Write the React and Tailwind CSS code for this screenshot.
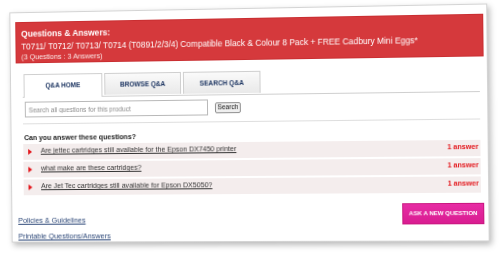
export default function App() {
  const rows = [
    "Are jettec cartridges still available for the Epson DX7450 printer",
    "what make are these cartridges?",
    "Are Jet Tec cartridges still available for Epson DX5050?",
  ];
  return (
    <div className="w-[500px] h-[253px] overflow-hidden bg-white pt-[8px] pl-[6px] font-['Liberation_Sans',Arial,sans-serif]">
      <div className="w-[479px] h-[234px] [transform:perspective(1000px)_rotateY(-4deg)_rotate(-0.6deg)] border border-[#d4d4d4] bg-white shadow-[2px_3px_6px_rgba(0,0,0,0.28)] flex flex-col">
        {/* Header */}
        <div className="mt-[9px] ml-[5px] mr-[3px] h-[45px] bg-[#d5393c] border border-[#c92e31] pl-[5px] pt-[6px] text-white">
          <div className="text-[8.6px] leading-[11px] font-bold">Questions &amp; Answers:</div>
          <div className="mt-[2px] text-[8.4px] leading-[10px] whitespace-nowrap">
            T0711/ T0712/ T0713/ T0714 (T0891/2/3/4) Compatible Black &amp; Colour 8 Pack + FREE Cadbury Mini Eggs*
          </div>
          <div className="mt-[1px] text-[7.3px] leading-[9px] text-[#fbe9e9]">(3 Questions : 3 Answers)</div>
        </div>

        {/* Content */}
        <div className="ml-[12px] mr-[7px]">
          {/* Tabs */}
          <div className="mt-[11px] flex gap-[2px] border-b border-[#cfcfcf] pl-[1px]">
            <div className="w-[79px] h-[22px] -mb-px box-content pb-px bg-white border border-b-0 border-[#cfcfcf] flex items-center justify-center text-[6.6px] font-bold text-[#1f3763]">
              Q&amp;A HOME
            </div>
            <div className="w-[78px] h-[22px] bg-gradient-to-b from-[#fafafa] to-[#e9e9e9] border border-b-0 border-[#cfcfcf] flex items-center justify-center text-[6.6px] font-bold text-[#1f3763]">
              BROWSE Q&amp;A
            </div>
            <div className="w-[78px] h-[22px] bg-gradient-to-b from-[#fafafa] to-[#e9e9e9] border border-b-0 border-[#cfcfcf] flex items-center justify-center text-[6.6px] font-bold text-[#1f3763]">
              SEARCH Q&amp;A
            </div>
          </div>

          {/* Search */}
          <div className="mt-[4px] flex items-center pl-[2px]">
            <input
              type="text"
              placeholder="Search all questions for this product"
              className="w-[187px] h-[16px] border border-[#b8b8b8] px-[3px] text-[6.6px] text-[#555] placeholder:text-[#8c8c8c] font-['Liberation_Sans',Arial,sans-serif] outline-none"
            />
            <button className="ml-[7px] w-[26px] h-[11px] border border-[#8f8f8f] rounded-[2px] bg-[#efefef] text-[6.6px] leading-none text-[#111] font-['Liberation_Sans',Arial,sans-serif] flex items-center justify-center">
              Search
            </button>
          </div>

          <div className="mt-[6px] h-px bg-[#dedede]" />

          <div className="mt-[9px] pl-[1px] text-[7.1px] leading-[10px] font-bold text-[#1a1a1a]">
            Can you answer these questions?
          </div>

          <div className="mt-[1px] flex flex-col gap-[2px]">
            {rows.map((q) => (
              <div key={q} className="h-[16px] bg-[#f4eded] flex items-center pl-[5px] pr-[2px]">
                <span className="w-0 h-0 border-y-[3px] border-y-transparent border-l-[4px] border-l-[#e3171c]" />
                <a href="#" className="ml-[9px] text-[7.1px] leading-none text-[#333] underline">
                  {q}
                </a>
                <span className="ml-auto text-[7.1px] leading-none font-bold text-[#e3171c]">1 answer</span>
              </div>
            ))}
          </div>
        </div>

        {/* Footer */}
        <div className="mt-[10px] ml-[6px] mr-[4px] flex justify-between items-start">
          <div className="pt-[11px] flex flex-col gap-[6px]">
            <a href="#" className="text-[7.4px] leading-[10px] text-[#2b4677] underline">Policies &amp; Guidelines</a>
            <a href="#" className="text-[7.4px] leading-[10px] text-[#2b4677] underline">Printable Questions/Answers</a>
          </div>
          <div className="w-[80px] h-[21px] bg-gradient-to-b from-[#e72ca4] to-[#d91c91] border border-[#c9177f] flex items-center justify-center text-[6px] font-bold text-white">
            ASK A NEW QUESTION
          </div>
        </div>
      </div>
    </div>
  );
}
